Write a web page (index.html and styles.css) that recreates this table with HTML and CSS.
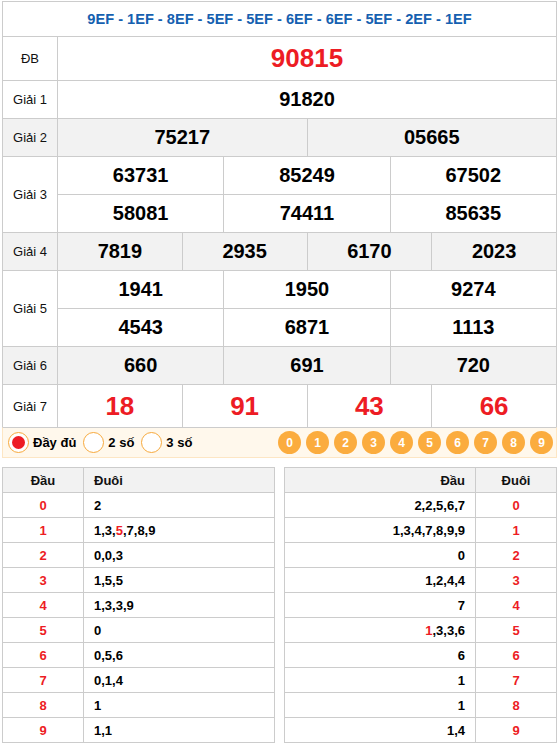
FILE: index.html
```html
<!DOCTYPE html>
<html lang="vi">
<head>
<meta charset="utf-8">
<link rel="stylesheet" href="styles.css">
</head>
<body>
<div class="page">
  <div class="board">
    <div class="head">9EF - 1EF - 8EF - 5EF - 5EF - 6EF - 6EF - 5EF - 2EF - 1EF</div>
    <div class="row r-db">
      <div class="label">ĐB</div>
      <div class="cells"><div class="line"><div class="cell big red">90815</div></div></div>
    </div>
    <div class="row">
      <div class="label">Giải 1</div>
      <div class="cells"><div class="line"><div class="cell">91820</div></div></div>
    </div>
    <div class="row alt">
      <div class="label">Giải 2</div>
      <div class="cells"><div class="line"><div class="cell">75217</div><div class="cell">05665</div></div></div>
    </div>
    <div class="row">
      <div class="label">Giải 3</div>
      <div class="cells">
        <div class="line"><div class="cell">63731</div><div class="cell">85249</div><div class="cell">67502</div></div>
        <div class="line"><div class="cell">58081</div><div class="cell">74411</div><div class="cell">85635</div></div>
      </div>
    </div>
    <div class="row alt">
      <div class="label">Giải 4</div>
      <div class="cells"><div class="line"><div class="cell">7819</div><div class="cell">2935</div><div class="cell">6170</div><div class="cell">2023</div></div></div>
    </div>
    <div class="row">
      <div class="label">Giải 5</div>
      <div class="cells">
        <div class="line"><div class="cell">1941</div><div class="cell">1950</div><div class="cell">9274</div></div>
        <div class="line"><div class="cell">4543</div><div class="cell">6871</div><div class="cell">1113</div></div>
      </div>
    </div>
    <div class="row alt">
      <div class="label">Giải 6</div>
      <div class="cells"><div class="line"><div class="cell">660</div><div class="cell">691</div><div class="cell">720</div></div></div>
    </div>
    <div class="row r-g7">
      <div class="label">Giải 7</div>
      <div class="cells"><div class="line"><div class="cell big red">18</div><div class="cell big red">91</div><div class="cell big red">43</div><div class="cell big red">66</div></div></div>
    </div>
  </div>

  <div class="filter">
    <label class="opt"><span class="radio on"></span>Đầy đủ</label>
    <label class="opt"><span class="radio"></span>2 số</label>
    <label class="opt"><span class="radio"></span>3 số</label>
    <div class="digits">
      <span class="dg">0</span><span class="dg">1</span><span class="dg">2</span><span class="dg">3</span><span class="dg">4</span><span class="dg">5</span><span class="dg">6</span><span class="dg">7</span><span class="dg">8</span><span class="dg">9</span>
    </div>
  </div>

  <div class="loto">
    <table class="lt left">
      <thead><tr><th class="c1">Đầu</th><th class="c2">Đuôi</th></tr></thead>
      <tbody>
        <tr><td class="k">0</td><td class="v">2</td></tr>
        <tr><td class="k">1</td><td class="v">1,3,<span class="red">5</span>,7,8,9</td></tr>
        <tr><td class="k">2</td><td class="v">0,0,3</td></tr>
        <tr><td class="k">3</td><td class="v">1,5,5</td></tr>
        <tr><td class="k">4</td><td class="v">1,3,3,9</td></tr>
        <tr><td class="k">5</td><td class="v">0</td></tr>
        <tr><td class="k">6</td><td class="v">0,5,6</td></tr>
        <tr><td class="k">7</td><td class="v">0,1,4</td></tr>
        <tr><td class="k">8</td><td class="v">1</td></tr>
        <tr><td class="k">9</td><td class="v">1,1</td></tr>
      </tbody>
    </table>
    <table class="lt right">
      <thead><tr><th class="c2">Đầu</th><th class="c1">Đuôi</th></tr></thead>
      <tbody>
        <tr><td class="v">2,2,5,6,7</td><td class="k">0</td></tr>
        <tr><td class="v">1,3,4,7,8,9,9</td><td class="k">1</td></tr>
        <tr><td class="v">0</td><td class="k">2</td></tr>
        <tr><td class="v">1,2,4,4</td><td class="k">3</td></tr>
        <tr><td class="v">7</td><td class="k">4</td></tr>
        <tr><td class="v"><span class="red">1</span>,3,3,6</td><td class="k">5</td></tr>
        <tr><td class="v">6</td><td class="k">6</td></tr>
        <tr><td class="v">1</td><td class="k">7</td></tr>
        <tr><td class="v">1</td><td class="k">8</td></tr>
        <tr><td class="v">1,4</td><td class="k">9</td></tr>
      </tbody>
    </table>
  </div>
</div>
</body>
</html>
```

FILE: styles.css
```css
* { box-sizing: border-box; }
html, body { margin: 0; padding: 0; background: #fff; }
body { font-family: "Liberation Sans", Arial, sans-serif; color: #000; }

.page { width: 555px; margin: 1px 0 0 2px; }

.board { border: 1px solid #ccc; border-bottom: none; }
.head {
  height: 34px;
  display: flex; align-items: center; justify-content: center;
  color: #1560b0; font-weight: bold; font-size: 14.6px;
}
.row { display: flex; border-top: 1px solid #ccc; }
.row.alt { background: #f2f2f2; }
.label {
  width: 54px; flex: none;
  display: flex; align-items: center; justify-content: center;
  font-size: 13px; color: #111;
}
.cells { flex: 1; display: flex; flex-direction: column; }
.line { display: flex; height: 37px; }
.line + .line { height: 38px; border-top: 1px solid #ccc; }
.r-db .line { height: 43px; }
.r-g7 .line { height: 42px; }
.cell {
  flex: 1 1 0; min-width: 0;
  border-left: 1px solid #ccc;
  display: flex; align-items: center; justify-content: center;
  font-size: 20px; font-weight: bold;
}
.cell.big { font-size: 26px; }
.red { color: #ed1c24; }

.filter {
  height: 31px;
  border: 1px solid #fde6c4; border-top: 1px solid #ccc;
  background: #fff8ec;
  display: flex; align-items: center;
  padding-left: 5px;
}
.opt {
  display: flex; align-items: center;
  font-size: 13px; font-weight: bold;
  margin-right: 7px;
}
.radio {
  width: 21px; height: 21px; border-radius: 50%;
  border: 1px solid #f7a93c; background: #fff;
  margin-right: 4px;
  display: flex; align-items: center; justify-content: center;
}
.radio.on::after {
  content: ""; width: 13px; height: 13px; border-radius: 50%; background: #ed1c24;
}
.digits { margin-left: auto; display: flex; gap: 5px; margin-right: 3px; }
.dg {
  width: 23px; height: 23px; border-radius: 50%;
  background: #fbac3e; color: #fff;
  font-size: 12px; font-weight: bold;
  display: flex; align-items: center; justify-content: center;
}

.loto { display: flex; justify-content: space-between; margin-top: 9px; }
.lt {
  width: 273px;
  border-collapse: collapse;
  font-size: 13px;
}
.lt th, .lt td { border: 1px solid #ccc; height: 25px; padding: 0 10px; }
.lt th { background: #f2f2f2; font-weight: bold; color: #111; }
.lt td { font-weight: bold; }
.lt .c1 { width: 81px; text-align: center; }
.left .c2 { text-align: left; }
.right .c2 { text-align: right; }
.lt .k { color: #ed1c24; text-align: center; width: 81px; }
.left .v { text-align: left; }
.right .v { text-align: right; }
```
